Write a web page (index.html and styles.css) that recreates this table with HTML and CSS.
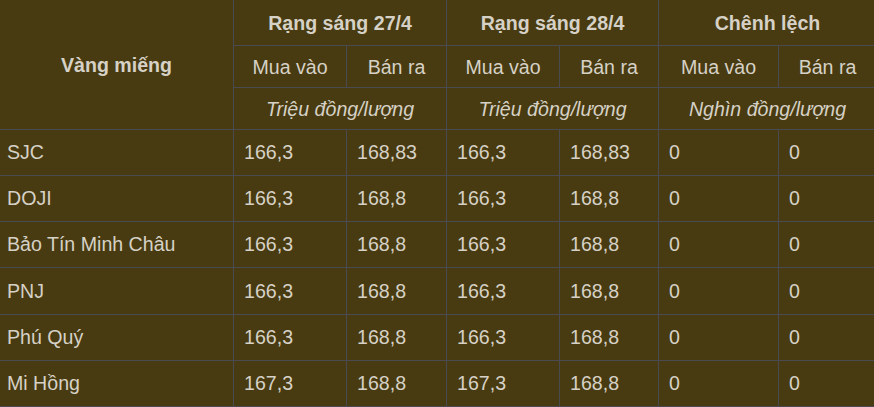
FILE: index.html
```html
<!DOCTYPE html>
<html lang="vi">
<head>
<meta charset="utf-8">
<title>Giá vàng miếng</title>
<link rel="stylesheet" href="styles.css">
</head>
<body>
<table class="gold">
  <colgroup>
    <col class="c-name">
    <col class="c-a">
    <col class="c-b">
    <col class="c-a">
    <col class="c-c">
    <col class="c-d">
    <col class="c-e">
  </colgroup>
  <thead>
    <tr class="h1">
      <th rowspan="3" class="first">Vàng miếng</th>
      <th colspan="2">Rạng sáng 27/4</th>
      <th colspan="2">Rạng sáng 28/4</th>
      <th colspan="2">Chênh lệch</th>
    </tr>
    <tr class="h2">
      <td>Mua vào</td><td>Bán ra</td>
      <td>Mua vào</td><td>Bán ra</td>
      <td>Mua vào</td><td>Bán ra</td>
    </tr>
    <tr class="h3">
      <td colspan="2">Triệu đồng/lượng</td>
      <td colspan="2">Triệu đồng/lượng</td>
      <td colspan="2">Nghìn đồng/lượng</td>
    </tr>
  </thead>
  <tbody>
    <tr><td class="first">SJC</td><td>166,3</td><td>168,83</td><td>166,3</td><td>168,83</td><td>0</td><td>0</td></tr>
    <tr><td class="first">DOJI</td><td>166,3</td><td>168,8</td><td>166,3</td><td>168,8</td><td>0</td><td>0</td></tr>
    <tr><td class="first">Bảo Tín Minh Châu</td><td>166,3</td><td>168,8</td><td>166,3</td><td>168,8</td><td>0</td><td>0</td></tr>
    <tr><td class="first">PNJ</td><td>166,3</td><td>168,8</td><td>166,3</td><td>168,8</td><td>0</td><td>0</td></tr>
    <tr><td class="first">Phú Quý</td><td>166,3</td><td>168,8</td><td>166,3</td><td>168,8</td><td>0</td><td>0</td></tr>
    <tr><td class="first">Mi Hồng</td><td>167,3</td><td>168,8</td><td>167,3</td><td>168,8</td><td>0</td><td>0</td></tr>
  </tbody>
</table>
</body>
</html>
```
FILE: styles.css
```css
html, body {
  margin: 0;
  padding: 0;
  background: #483b11;
  overflow: hidden;
}

.gold {
  border-collapse: collapse;
  table-layout: fixed;
  width: 877px;
  margin-top: -1px;
  margin-left: -1px;
  font-family: "Liberation Sans", Arial, sans-serif;
  font-size: 19.6px;
  line-height: 22px;
  color: #d6d1c6;
}

.c-name { width: 234px; }
.c-a { width: 113px; }
.c-b { width: 100px; }
.c-c { width: 99px; }
.c-d { width: 120px; }
.c-e { width: 98px; }

.gold th,
.gold td {
  border: 1px solid #4a4a52;
  padding: 0 10px;
  box-sizing: border-box;
  white-space: nowrap;
  overflow: hidden;
}

.gold thead th,
.gold thead td {
  text-align: center;
}

.gold th {
  font-weight: bold;
}

.gold .h1 th { height: 46px; }
.gold .h2 td { height: 42px; }
.gold .h3 td { height: 42px; font-style: italic; }

.gold tbody td {
  height: 46.17px;
  text-align: left;
  padding-bottom: 1px;
}

.gold tbody td.first {
  padding-left: 7px;
}
```
